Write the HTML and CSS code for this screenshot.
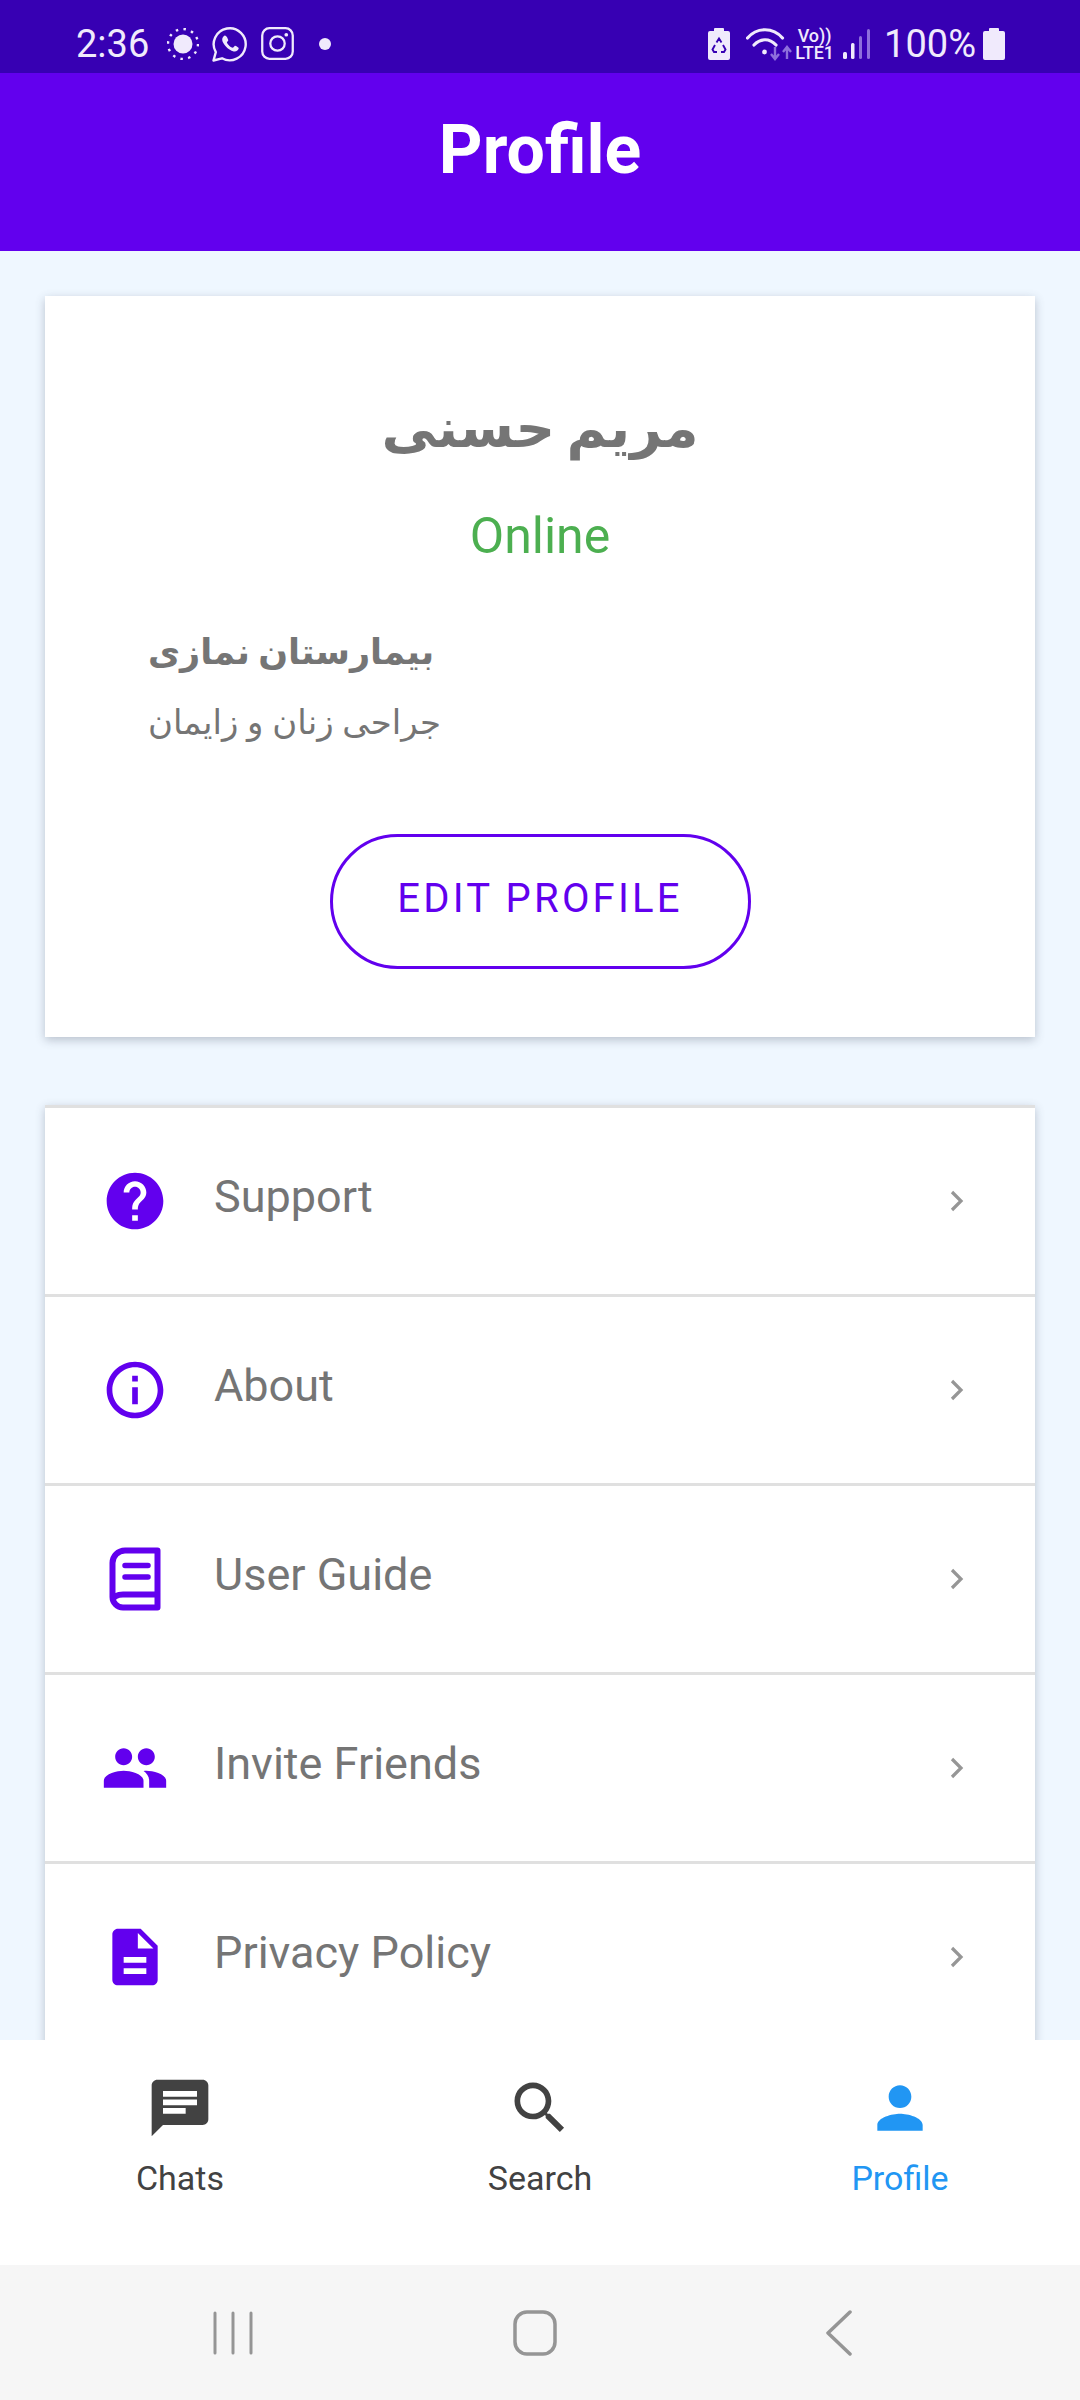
FILE: index.html
```html
<!DOCTYPE html>
<html lang="en">
<head>
    <meta charset="UTF-8">
    <meta name="viewport" content="width=device-width, initial-scale=1.0">
    <title>Profile</title>
    <link rel="stylesheet" href="styles.css">
</head>
<body>
    <div class="status-bar">
        <div class="status-left">
            <span class="status-time">2:36</span>
            <svg class="st-sun" viewBox="0 0 32 32" width="32" height="32"><circle cx="16" cy="16" r="9.500" fill="#f0eafc"/><circle cx="16" cy="16" r="15" fill="none" stroke="#f0eafc" stroke-width="2.400" stroke-dasharray="2.500 5.354"/></svg>
            <svg class="st-whatsapp" viewBox="0 0 36 36" width="36" height="36"><path d="M1.500 34.500l2.300-8.300A16 16 0 1 1 10 32.300z" fill="none" stroke="#f0eafc" stroke-width="2.400" stroke-linejoin="round"/><path d="M12.800 9.500c-1 .4-2.800 2-2.600 4.600.3 3.400 5.800 10.200 11.500 11.300 2.600.5 4.700-1.300 5-3 .1-.8-3.400-2.800-4-2.500-.7.300-1.200 1.800-2 1.900-1.300.1-5.200-3-5.800-5.200-.2-.8 1.400-1.600 1.400-2.400 0-.7-1.800-4.900-3.500-4.700z" fill="#f0eafc"/></svg>
            <svg class="st-insta" viewBox="0 0 32 32" width="33" height="33"><rect x="1.200" y="1.200" width="29.600" height="29.600" rx="7" fill="none" stroke="#f0eafc" stroke-width="2.200"/><circle cx="16" cy="16" r="7" fill="none" stroke="#f0eafc" stroke-width="2.200"/><circle cx="24.500" cy="7.500" r="1.800" fill="#f0eafc"/></svg>
            <span class="status-dot"></span>
        </div>
        <div class="status-right">
            <svg class="st-saver" viewBox="0 0 22 32" width="22" height="32"><path d="M7 0h8a1 1 0 0 1 1 1v2h4a2 2 0 0 1 2 2v25a2 2 0 0 1-2 2H2a2 2 0 0 1-2-2V5a2 2 0 0 1 2-2h4V1a1 1 0 0 1 1-1z" fill="#f0eafc"/><path d="M8.500 14.500L11 10.500l2.500 4M15 17l2.500 4.500-1.500 2.500h-3M9 24H6L4.500 21.500 7 17" fill="none" stroke="#3700b3" stroke-width="1.900"/></svg>
            <svg class="st-wifi" viewBox="0 0 46 34" width="46" height="34"><g fill="none" stroke="#f0eafc" stroke-width="3.200" stroke-linecap="round"><path d="M1.500 11C11 0 27 0 36.500 11"/><path d="M8 18c6.500-7 15.500-7 22 0"/></g><circle cx="18.500" cy="25" r="2.400" fill="#f0eafc"/><path d="M29 20v11M25 27l4 5 4-5M41 32V20M37 25l4-5 4 5" fill="none" stroke="#8e6fdc" stroke-width="2.400"/></svg>
            <span class="status-volte"><span>Vo))</span><span>LTE1</span></span>
            <svg class="st-signal" viewBox="0 0 28 30" width="28" height="30"><rect x="0" y="23" width="4" height="7" rx="1.500" fill="#f0eafc"/><rect x="8" y="14" width="3.500" height="16" rx="1.500" fill="#f0eafc"/><rect x="16" y="7" width="3" height="23" rx="1.500" fill="#8e6fdc"/><rect x="24" y="0" width="3" height="30" rx="1.500" fill="#8e6fdc"/></svg>
            <span class="status-pct">100%</span>
            <svg class="st-batt" viewBox="0 0 22 32" width="22" height="32"><path d="M7 0h8a1 1 0 0 1 1 1v2h4a2 2 0 0 1 2 2v25a2 2 0 0 1-2 2H2a2 2 0 0 1-2-2V5a2 2 0 0 1 2-2h4V1a1 1 0 0 1 1-1z" fill="#f0eafc"/></svg>
        </div>
    </div>

    <header class="app-header">
        <h1>Profile</h1>
    </header>

    <main class="content">
        <section class="card profile-card">
            <h2 class="profile-name">مریم حسنی</h2>
            <div class="profile-status">Online</div>
            <div class="profile-work">
                <div class="work-place">بیمارستان نمازی</div>
                <div class="work-field">جراحی زنان و زایمان</div>
            </div>
            <button class="edit-button">EDIT PROFILE</button>
        </section>

        <section class="card menu-card">
            <div class="menu-row">
                <span class="menu-icon"><svg viewBox="0 0 24 24" width="68" height="68"><path d="M12 2C6.480 2 2 6.480 2 12s4.480 10 10 10 10-4.480 10-10S17.520 2 12 2zm1 17h-2v-2h2v2zm2.070-7.750l-.9.920C13.450 12.900 13 13.500 13 15h-2v-.5c0-1.100.450-2.100 1.170-2.830l1.240-1.260c.370-.360.590-.860.590-1.410 0-1.100-.9-2-2-2s-2 .9-2 2H8c0-2.210 1.790-4 4-4s4 1.790 4 4c0 .880-.360 1.680-.930 2.250z"/></svg></span>
                <span class="menu-label">Support</span>
                <svg class="chevron" viewBox="0 0 14 22" width="14" height="22"><path d="M2 2l9 9-9 9" fill="none" stroke="#969696" stroke-width="3.200"/></svg>
            </div>
            <div class="menu-row">
                <span class="menu-icon"><svg viewBox="0 0 24 24" width="68" height="68"><path d="M11 7h2v2h-2zm0 4h2v6h-2zm1-9C6.480 2 2 6.480 2 12s4.480 10 10 10 10-4.480 10-10S17.520 2 12 2zm0 18c-4.410 0-8-3.590-8-8s3.590-8 8-8 8 3.590 8 8-3.590 8-8 8z"/></svg></span>
                <span class="menu-label">About</span>
                <svg class="chevron" viewBox="0 0 14 22" width="14" height="22"><path d="M2 2l9 9-9 9" fill="none" stroke="#969696" stroke-width="3.200"/></svg>
            </div>
            <div class="menu-row">
                <span class="menu-icon"><svg viewBox="0 0 68 68" width="68" height="68"><path d="M56.500 5.500H24A12.500 12.500 0 0 0 11.500 18v34A10.500 10.500 0 0 0 22 62.500h34.500zM12 55c0-3 4-5.500 10-5.500h34" fill="none" stroke="#6200ee" stroke-width="6" stroke-linejoin="round"/><path d="M24 20.500h23M24 32h23" fill="none" stroke="#6200ee" stroke-width="5.500" stroke-linecap="round"/></svg></span>
                <span class="menu-label">User Guide</span>
                <svg class="chevron" viewBox="0 0 14 22" width="14" height="22"><path d="M2 2l9 9-9 9" fill="none" stroke="#969696" stroke-width="3.200"/></svg>
            </div>
            <div class="menu-row">
                <span class="menu-icon"><svg viewBox="0 0 24 24" width="68" height="68"><path d="M16 11c1.660 0 2.990-1.340 2.990-3S17.660 5 16 5c-1.660 0-3 1.340-3 3s1.340 3 3 3zm-8 0c1.660 0 2.990-1.340 2.990-3S9.660 5 8 5C6.340 5 5 6.340 5 8s1.340 3 3 3zm0 2c-2.330 0-7 1.170-7 3.500V19h14v-2.500c0-2.330-4.670-3.500-7-3.500zm8 0c-.290 0-.620.020-.970.050 1.160.840 1.970 1.970 1.970 3.450V19h6v-2.500c0-2.330-4.670-3.500-7-3.500z"/></svg></span>
                <span class="menu-label">Invite Friends</span>
                <svg class="chevron" viewBox="0 0 14 22" width="14" height="22"><path d="M2 2l9 9-9 9" fill="none" stroke="#969696" stroke-width="3.200"/></svg>
            </div>
            <div class="menu-row">
                <span class="menu-icon"><svg viewBox="0 0 24 24" width="68" height="68"><path d="M14 2H6c-1.100 0-1.990.9-1.990 2L4 20c0 1.100.890 2 1.990 2H18c1.100 0 2-.9 2-2V8l-6-6zm2 16H8v-2h8v2zm0-4H8v-2h8v2zm-3-5V3.500L18.500 9H13z"/></svg></span>
                <span class="menu-label">Privacy Policy</span>
                <svg class="chevron" viewBox="0 0 14 22" width="14" height="22"><path d="M2 2l9 9-9 9" fill="none" stroke="#969696" stroke-width="3.200"/></svg>
            </div>
        </section>
    </main>

    <nav class="tab-bar">
        <div class="tab">
            <svg viewBox="0 0 24 24" width="68" height="68"><path d="M20 2H4c-1.100 0-2 .9-2 2v18l4-4h14c1.100 0 2-.9 2-2V4c0-1.100-.9-2-2-2zM6 9h12v2H6V9zm8 5H6v-2h8v2zm4-6H6V6h12v2z"/></svg>
            <span>Chats</span>
        </div>
        <div class="tab">
            <svg viewBox="0 0 24 24" width="68" height="68"><path d="M15.500 14h-.79l-.28-.27C15.410 12.590 16 11.110 16 9.500 16 5.910 13.090 3 9.500 3S3 5.910 3 9.500 5.910 16 9.500 16c1.610 0 3.090-.59 4.230-1.570l.27.280v.79l5 4.990L20.490 19l-4.990-5zm-6 0C7.010 14 5 11.990 5 9.500S7.010 5 9.500 5 14 7.010 14 9.500 11.990 14 9.500 14z"/></svg>
            <span>Search</span>
        </div>
        <div class="tab active">
            <svg viewBox="0 0 24 24" width="68" height="68"><path d="M12 12c2.210 0 4-1.790 4-4s-1.790-4-4-4-4 1.790-4 4 1.790 4 4 4zm0 2c-2.670 0-8 1.340-8 4v2h16v-2c0-2.660-5.330-4-8-4z"/></svg>
            <span>Profile</span>
        </div>
    </nav>

    <div class="system-nav">
        <svg viewBox="0 0 44 44" width="44" height="44"><path d="M4 2v40M22 2v40M40 2v40" fill="none" stroke="#959595" stroke-width="3" stroke-linecap="round"/></svg>
        <svg class="nav-home" viewBox="0 0 44 46" width="44" height="46"><rect x="2" y="2" width="40" height="42" rx="12" fill="none" stroke="#959595" stroke-width="3.500"/></svg>
        <svg class="nav-back" viewBox="0 0 28 46" width="28" height="46"><path d="M25 2L3 23l22 21" fill="none" stroke="#959595" stroke-width="3.500" stroke-linecap="round" stroke-linejoin="round"/></svg>
    </div>
</body>
</html>
```

FILE: styles.css
```css
* {
    box-sizing: border-box;
}

html, body {
    margin: 0;
    padding: 0;
}

body {
    width: 1080px;
    height: 2400px;
    overflow: hidden;
    display: flex;
    flex-direction: column;
    font-family: Roboto, 'Noto Sans', sans-serif;
    background-color: #eff7ff;
}

.status-bar {
    height: 73px;
    flex-shrink: 0;
    display: flex;
    justify-content: space-between;
    align-items: center;
    padding: 14px 75px 0 76px;
    background-color: #3700b3;
    color: #f0eafc;
}

.status-left, .status-right {
    display: flex;
    align-items: center;
}

.status-time {
    font-size: 38px;
    margin-right: 18px;
}

.st-whatsapp {
    margin-left: 13px;
}

.st-insta {
    margin-left: 13px;
}

.status-dot {
    width: 12px;
    height: 12px;
    margin-left: 25px;
    border-radius: 50%;
    background-color: #f0eafc;
}

.st-wifi {
    margin-left: 16px;
}

.status-volte {
    display: flex;
    flex-direction: column;
    align-items: center;
    margin-left: 3px;
    font-size: 18px;
    line-height: 17px;
    font-weight: 500;
}

.st-signal {
    margin-left: 9px;
}

.status-pct {
    font-size: 38px;
    margin-left: 13px;
}

.st-batt {
    margin-left: 7px;
}

.app-header {
    height: 178px;
    flex-shrink: 0;
    background-color: #6200ee;
    color: #fff;
    text-align: center;
}

.app-header h1 {
    margin: 0;
    padding-top: 37px;
    font-size: 68px;
    line-height: 80px;
    font-weight: 700;
}

.content {
    flex: 1;
    min-height: 0;
    overflow: hidden;
    padding: 45px 45px 0;
}

.card {
    background-color: #fff;
    box-shadow: 0 3px 9px rgba(60, 70, 90, 0.3);
}

.profile-card {
    height: 741px;
    padding-top: 93px;
    display: flex;
    flex-direction: column;
    align-items: center;
}

.profile-name {
    margin: 0;
    font-family: 'DejaVu Sans', sans-serif;
    font-size: 55px;
    line-height: 78px;
    font-weight: 700;
    word-spacing: -8px;
    color: #757575;
}

.profile-status {
    margin-top: 40px;
    font-size: 50px;
    line-height: 58px;
    color: #4caf50;
}

.profile-work {
    align-self: flex-start;
    margin-top: 59px;
    padding-left: 103px;
    font-family: 'DejaVu Sans', sans-serif;
    color: #757575;
}

.work-place {
    font-size: 35px;
    line-height: 56px;
    font-weight: 700;
    word-spacing: -4px;
}

.work-field {
    margin-top: 17px;
    font-size: 34px;
    line-height: 50px;
    word-spacing: -2px;
}

.edit-button {
    width: 421px;
    height: 135px;
    margin-top: 87px;
    padding-bottom: 8px;
    border: 3px solid #6200ee;
    border-radius: 68px;
    background-color: #fff;
    color: #6200ee;
    font-family: Roboto, sans-serif;
    font-size: 40px;
    letter-spacing: 3.2px;
}

.menu-card {
    margin-top: 68px;
    border-top: 3px solid #e0e0e0;
}

.menu-row {
    height: 189px;
    display: flex;
    align-items: center;
    padding: 0 71px 0 56px;
    border-bottom: 3px solid #e0e0e0;
}

.menu-icon {
    width: 68px;
    height: 68px;
    flex-shrink: 0;
    fill: #6200ee;
}

.menu-icon svg {
    display: block;
}

.menu-label {
    flex: 1;
    margin-left: 45px;
    margin-bottom: 9px;
    font-size: 45px;
    color: #757575;
}

.tab-bar {
    height: 225px;
    flex-shrink: 0;
    display: flex;
    padding-top: 34px;
    background-color: #fff;
    position: relative;
}

.tab {
    flex: 1;
    display: flex;
    flex-direction: column;
    align-items: center;
    font-size: 34px;
    color: #424242;
    fill: #424242;
}

.tab span {
    margin-top: 16px;
    line-height: 40px;
}

.tab.active {
    color: #2196f3;
    fill: #2196f3;
}

.system-nav {
    height: 135px;
    flex-shrink: 0;
    display: flex;
    align-items: center;
    padding-left: 211px;
    background-color: #f6f6f6;
}

.nav-home {
    margin-left: 258px;
}

.nav-back {
    margin-left: 268px;
}
```
